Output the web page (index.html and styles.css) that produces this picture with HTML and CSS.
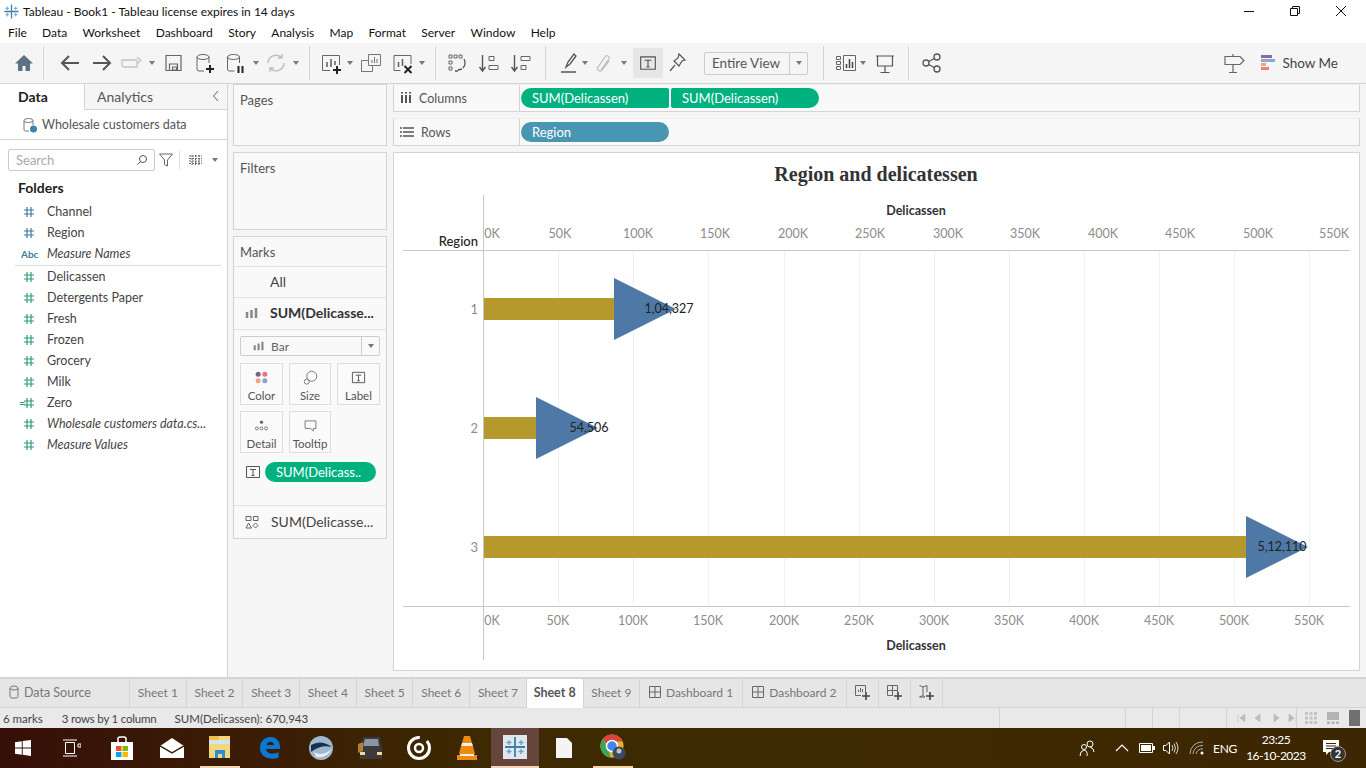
FILE: index.html
```html
<!DOCTYPE html>
<html lang="en">
<head>
<meta charset="UTF-8">
<title>Tableau - Book1</title>
<link rel="stylesheet" href="styles.css">
</head>
<body>
<svg class="defs" width="0" height="0">
  <symbol id="hash" viewBox="0 0 12 12"><path d="M4 1v10M8 1v10M1 4h10M1 8h10" fill="none" stroke="currentColor" stroke-width="1.2"/></symbol>
  <symbol id="caret" viewBox="0 0 12 24"><path d="M3 10h6l-3 4z" fill="#777"/></symbol>
  <symbol id="tbox" viewBox="0 0 16 16"><path d="M1.5 2.5h13v11h-13z" fill="none" stroke="#555"/><path d="M5 5.500h6M8 5.500v6M6.500 11.500h3" fill="none" stroke="#555"/></symbol>
  <symbol id="bars" viewBox="0 0 14 14"><path d="M2 6v6M6.5 4v8M11 2v10" fill="none" stroke="#888" stroke-width="2.5"/></symbol>
  <symbol id="snow" viewBox="0 0 24 24"><path d="M12 2v20M2 12h20" stroke="#3f7ea8" stroke-width="1.8"/><path d="M6 5v5M3.500 7.500h5M18 5v5M15.500 7.500h5M6 14v5M3.500 16.500h5M18 14v5M15.500 16.500h5" stroke="#6ba0c4" stroke-width="1.3"/></symbol>
</svg>

<div class="titlebar">
  <svg class="app-icon" width="17" height="17"><use href="#snow"/></svg>
  <span class="title-text">Tableau - Book1 - Tableau license expires in 14 days</span>
  <div class="win-controls">
    <svg width="46" height="20" viewBox="0 0 46 20"><path d="M18 10.5h10" stroke="#111"/></svg>
    <svg width="46" height="20" viewBox="0 0 46 20"><path d="M18.500 7.500h7v7h-7zM20.500 7V5.500h7v7H26" fill="none" stroke="#111"/></svg>
    <svg width="46" height="20" viewBox="0 0 46 20"><path d="M18 5l10 10M28 5L18 15" stroke="#111"/></svg>
  </div>
</div>

<div class="menubar">
  <span>File</span><span>Data</span><span>Worksheet</span><span>Dashboard</span><span>Story</span><span>Analysis</span><span>Map</span><span>Format</span><span>Server</span><span>Window</span><span>Help</span>
</div>

<div class="toolbar">
  <svg width="32" height="24" viewBox="0 0 24 24"><path d="M12 4L3 12.500h3V20h4.500v-5h3v5H18v-7.500h3z" fill="#5e7182"/></svg>
  <i class="sep first"></i>
  <svg width="32" height="24" viewBox="0 0 24 24"><path d="M21 12H4M11 5l-7 7 7 7" fill="none" stroke="#555" stroke-width="2"/></svg>
  <svg width="32" height="24" viewBox="0 0 24 24"><path d="M3 12h17M13 5l7 7-7 7" fill="none" stroke="#555" stroke-width="2"/></svg>
  <svg width="28" height="24" viewBox="0 0 24 24"><path d="M2 9h15v7H4a2 2 0 0 1-2-2zM17 6l4 3.500-4 3.500" fill="none" stroke="#c4c4c4" stroke-width="1.3"/></svg>
  <svg width="12" height="24"><use href="#caret"/></svg>
  <svg width="31" height="24" viewBox="0 0 24 24"><path d="M4.500 4.500h15v15h-15zM8 19v-6h8v6M11 16h4v3h-4z" fill="none" stroke="#666" stroke-width="1.2"/></svg>
  <svg width="32" height="24" viewBox="0 0 24 24"><ellipse cx="10" cy="6" rx="6" ry="2.5" fill="none" stroke="#666"/><path d="M4 6v12a2 2 0 0 0 2 2h5M16 6v6" fill="none" stroke="#666"/><path d="M17 14v8M13 18h8" stroke="#222" stroke-width="2"/></svg>
  <svg width="29" height="24" viewBox="0 0 24 24"><ellipse cx="10" cy="6" rx="6" ry="2.5" fill="none" stroke="#666"/><path d="M4 6v12a2 2 0 0 0 2 2h5M16 6v6" fill="none" stroke="#666"/><path d="M15 15v7M19 15v7" stroke="#222" stroke-width="2"/></svg>
  <svg width="12" height="24"><use href="#caret"/></svg>
  <svg width="28" height="24" viewBox="0 0 24 24"><path d="M4 12a8 8 0 0 1 14-5M20 12a8 8 0 0 1-14 5M18 3v4h-4M6 21v-4h4" fill="none" stroke="#c0c0c0" stroke-width="1.5"/></svg>
  <svg width="12" height="24"><use href="#caret"/></svg>
  <i class="sep"></i>
  <svg width="32" height="24" viewBox="0 0 24 24"><path d="M3.500 4.500h17V14M11 19.500H3.500v-15" fill="none" stroke="#666"/><path d="M8 16v-5M12 16V8M16 14v-4" stroke="#666" stroke-width="1.6"/><path d="M18 15v8M14 19h8" stroke="#222" stroke-width="2"/></svg>
  <svg class="tight" width="12" height="24"><use href="#caret"/></svg>
  <svg width="30" height="24" viewBox="0 0 24 24"><path d="M9.500 3.500h12v11h-12zM2.500 9.500H9M2.500 9.500v11h11v-6" fill="none" stroke="#777"/><path d="M13 12V9M15.500 12V6M18 12V8" stroke="#777"/></svg>
  <svg width="33" height="24" viewBox="0 0 24 24"><path d="M3.500 4.500h17V13M10 19.500H3.500v-15" fill="none" stroke="#666"/><path d="M8 16v-5M12 15V8" stroke="#666" stroke-width="1.6"/><path d="M14 15l7 7M21 15l-7 7" stroke="#222" stroke-width="2"/></svg>
  <svg class="tight" width="12" height="24"><use href="#caret"/></svg>
  <i class="sep"></i>
  <svg width="32" height="24" viewBox="0 0 24 24"><path d="M4 4h3v3H4zM9 4h3v3H9zM14 4h3v3h-3zM4 10h3v3H4zM4 16h3v3H4z" fill="none" stroke="#666"/><path d="M19 8a8 8 0 0 1-1 9M17 18l-4 1M10 20h3" fill="none" stroke="#555" stroke-width="1.3"/></svg>
  <svg width="33" height="24" viewBox="0 0 24 24"><path d="M5 4v15M2 16l3 4 3-4" fill="none" stroke="#555" stroke-width="1.4"/><path d="M11.500 5.500h5v4h-5zM11.500 14.500h9v4h-9z" fill="none" stroke="#666"/></svg>
  <svg width="31" height="24" viewBox="0 0 24 24"><path d="M5 4v15M2 16l3 4 3-4" fill="none" stroke="#555" stroke-width="1.4"/><path d="M11.500 5.500h9v4h-9zM11.500 14.500h5v4h-5z" fill="none" stroke="#666"/></svg>
  <i class="sep wide"></i>
  <svg width="26" height="24" viewBox="0 0 24 24"><path d="M9 16l2-5 6-8 2 2-6 8zM4 21h15" fill="none" stroke="#555" stroke-width="1.3"/></svg>
  <svg class="tight" width="12" height="24"><use href="#caret"/></svg>
  <svg width="26" height="24" viewBox="0 0 24 24"><path d="M9 19l8-11a2 2 0 0 0-4-2l-7 10a2.500 2.500 0 0 0 4 3l7-9" fill="none" stroke="#c0c0c0" stroke-width="1.3"/></svg>
  <svg width="14" height="24"><use href="#caret"/></svg>
  <span class="tool-on"><svg width="18" height="18"><use href="#tbox"/></svg></span>
  <svg width="28" height="24" viewBox="0 0 24 24"><path d="M14 3l6 6-3 1-3 5-5-5 4-3zM10 14l-5 6" fill="none" stroke="#555" stroke-width="1.2"/></svg>
  <div class="fit-box"><span>Entire View</span><b><svg width="12" height="24"><use href="#caret"/></svg></b></div>
  <i class="sep fit-sep"></i>
  <svg width="28" height="24" viewBox="0 0 22 24"><path d="M1.500 5.500h4v3h-4zM1.500 10.500h4v3h-4zM1.500 15.500h4v3h-4zM8.500 4.500h12v15h-12z" fill="none" stroke="#666"/><path d="M11.500 17v-4M14.500 17V8M17.500 17v-6" stroke="#444" stroke-width="1.5"/></svg>
  <svg class="tight" width="12" height="24"><use href="#caret"/></svg>
  <svg width="32" height="24" viewBox="0 0 24 24"><path d="M3 5h18M4.500 5v10h15V5M12 15v6M7.500 21.500h9" fill="none" stroke="#555" stroke-width="1.2"/></svg>
  <i class="sep"></i>
  <svg width="36" height="24" viewBox="0 0 24 24"><circle cx="6" cy="12" r="3" fill="none" stroke="#555" stroke-width="1.3"/><circle cx="17" cy="6" r="3" fill="none" stroke="#555" stroke-width="1.3"/><circle cx="17" cy="18" r="3" fill="none" stroke="#555" stroke-width="1.3"/><path d="M8.700 10.500l5.600-3M8.700 13.500l5.600 3" stroke="#555" stroke-width="1.3"/></svg>
  <div class="toolbar-right">
    <svg class="guide" width="24" height="24" viewBox="0 0 24 24"><path d="M3 5.500h15l4 4-4 4H3zM11 5.500V3M11 13.500V21M7 21.500h8" fill="none" stroke="#666" stroke-width="1.2"/></svg>
    <div class="showme">
      <svg width="15" height="16" viewBox="0 0 15 16"><path d="M0 0h11v3H0z" fill="#8a6d98"/><path d="M0 4h14v3H0z" fill="#86a9d0"/><path d="M0 8h5v3H0z" fill="#f2a673"/><path d="M0 12h8v3H0z" fill="#f27a80"/></svg>
      <span>Show Me</span>
    </div>
  </div>
</div>

<div class="workspace">
  <div class="data-pane">
    <div class="pane-tabs">
      <div class="pane-tab active">Data</div>
      <div class="pane-tab">Analytics<svg class="collapse" width="8" height="12" viewBox="0 0 8 12"><path d="M6 1L1.500 6 6 11" fill="none" stroke="#666"/></svg></div>
    </div>
    <div class="source-row">
      <svg width="16" height="16" viewBox="0 0 16 16"><ellipse cx="6.500" cy="3.500" rx="4.500" ry="2" fill="none" stroke="#777"/><path d="M2 3.500v9a1.500 1.500 0 0 0 1.500 1.500H7M11 3.500V8" fill="none" stroke="#777"/><circle cx="11.500" cy="12" r="3.500" fill="#3d84a8"/></svg>
      <span>Wholesale customers data</span>
    </div>
    <div class="search-row">
      <div class="search-box"><span>Search</span><svg width="12" height="12" viewBox="0 0 12 12"><circle cx="7" cy="5" r="3.500" fill="none" stroke="#555"/><path d="M4.500 7.500L1.500 10.500" stroke="#555"/></svg></div>
      <svg width="16" height="16" viewBox="0 0 16 16"><path d="M1.500 2h13L9.500 8v6l-3-1.500V8z" fill="none" stroke="#666"/></svg>
      <i class="search-sep"></i>
      <svg width="13" height="10" viewBox="0 0 13 10"><path d="M0 1h13M0 3.500h13M0 6h13M0 8.500h13M3 0v10M6.500 0v10M10 0v10" stroke="#666" stroke-dasharray="2 1"/></svg>
      <svg class="search-caret" width="12" height="24"><use href="#caret"/></svg>
    </div>
    <div class="folders">Folders</div>
    <ul class="fields">
      <li class="dim"><svg width="12" height="12"><use href="#hash"/></svg><span>Channel</span></li>
      <li class="dim"><svg width="12" height="12"><use href="#hash"/></svg><span>Region</span></li>
      <li class="dim divider"><em class="abc">Abc</em><span class="it">Measure Names</span></li>
      <li><svg width="12" height="12"><use href="#hash"/></svg><span>Delicassen</span></li>
      <li><svg width="12" height="12"><use href="#hash"/></svg><span>Detergents Paper</span></li>
      <li><svg width="12" height="12"><use href="#hash"/></svg><span>Fresh</span></li>
      <li><svg width="12" height="12"><use href="#hash"/></svg><span>Frozen</span></li>
      <li><svg width="12" height="12"><use href="#hash"/></svg><span>Grocery</span></li>
      <li><svg width="12" height="12"><use href="#hash"/></svg><span>Milk</span></li>
      <li><em class="calc">=</em><svg width="12" height="12"><use href="#hash"/></svg><span>Zero</span></li>
      <li><svg width="12" height="12"><use href="#hash"/></svg><span class="it">Wholesale customers data.cs...</span></li>
      <li><svg width="12" height="12"><use href="#hash"/></svg><span class="it">Measure Values</span></li>
    </ul>
  </div>

  <div class="cards">
    <div class="card pages">Pages</div>
    <div class="card filters">Filters</div>
    <div class="marks">
      <div class="marks-head">Marks</div>
      <div class="marks-all">All</div>
      <div class="marks-sum"><svg width="14" height="14"><use href="#bars"/></svg><b>SUM(Delicasse...</b></div>
      <div class="marks-body">
        <div class="mark-type"><svg width="12" height="12"><use href="#bars"/></svg><span>Bar</span><b><svg width="12" height="24"><use href="#caret"/></svg></b></div>
        <div class="mark-btns">
          <div class="mark-btn">
            <svg width="18" height="18" viewBox="0 0 18 18"><circle cx="5" cy="5" r="3" fill="#7b5f8f"/><circle cx="13" cy="5" r="3" fill="#f0707a"/><circle cx="5" cy="13" r="3" fill="#f2a673"/><circle cx="13" cy="13" r="3" fill="#7fa5d0"/></svg>
            <span>Color</span>
          </div>
          <div class="mark-btn">
            <svg width="18" height="18" viewBox="0 0 18 18"><circle cx="10.500" cy="7.500" r="6" fill="none" stroke="#666"/><circle cx="4.500" cy="14" r="3" fill="#fafafa" stroke="#666"/></svg>
            <span>Size</span>
          </div>
          <div class="mark-btn">
            <svg width="18" height="18"><use href="#tbox"/></svg>
            <span>Label</span>
          </div>
          <div class="mark-btn">
            <svg width="18" height="18" viewBox="0 0 18 18"><circle cx="9" cy="5" r="2" fill="#666"/><circle cx="3.500" cy="12.500" r="1.800" fill="none" stroke="#666"/><circle cx="9" cy="12.500" r="1.800" fill="none" stroke="#666"/><circle cx="14.500" cy="12.500" r="1.800" fill="none" stroke="#666"/></svg>
            <span>Detail</span>
          </div>
          <div class="mark-btn">
            <svg width="18" height="18" viewBox="0 0 18 18"><path d="M2.500 3.500h13v9h-3v3l-3.500-3h-6.500z" fill="none" stroke="#666"/></svg>
            <span>Tooltip</span>
          </div>
        </div>
        <div class="mark-pill-row">
          <svg width="16" height="16"><use href="#tbox"/></svg>
          <span class="mark-pill">SUM(Delicass..</span>
        </div>
      </div>
      <div class="marks-foot">
        <svg width="14" height="14" viewBox="0 0 14 14"><path d="M1 1.500h5v4H1zM8.500 1.500h4.500v4H8.500zM3.500 8l3 5h-5.500zM10.500 8l2.500 2.500-2.500 2.500L8 10.500z" fill="none" stroke="#666"/></svg>
        <span>SUM(Delicasse...</span>
      </div>
    </div>
  </div>

  <div class="view">
    <div class="shelf">
      <div class="shelf-label">
        <svg width="12" height="12" viewBox="0 0 12 12"><path d="M2 3v8M6 3v8M10 3v8M2 0v1.500M6 0v1.500M10 0v1.500" stroke="#555" stroke-width="2"/></svg>
        <span>Columns</span>
      </div>
      <span class="pill green left">SUM(Delicassen)</span>
      <span class="pill green right">SUM(Delicassen)</span>
    </div>
    <div class="shelf">
      <div class="shelf-label">
        <svg width="14" height="12" viewBox="0 0 14 12"><path d="M3 2h11M3 6h11M3 10h11M0 2h2M0 6h2M0 10h2" stroke="#555" stroke-width="1.5"/></svg>
        <span>Rows</span>
      </div>
      <span class="pill blue">Region</span>
    </div>

    <div class="chart">
      <svg width="965" height="517" viewBox="394 153 965 517">
        <text class="chart-title" x="876" y="181" text-anchor="middle">Region and delicatessen</text>
        <g class="grid">
          <path d="M558.500 250V606M633.500 250V606M708.500 250V606M784.500 250V606M859.500 250V606M934.500 250V606M1009.500 250V606M1084.500 250V606M1159.500 250V606M1234.500 250V606M1309.500 250V606"/>
        </g>
        <path class="axis" d="M483.500 195V660M403 250.500H1350M403 606.500H1350"/>

        <text class="axis-title" x="916" y="215" text-anchor="middle">Delicassen</text>
        <text class="axis-title" x="916" y="650" text-anchor="middle">Delicassen</text>
        <text class="row-title" x="478" y="246" text-anchor="end">Region</text>

        <g class="tick" text-anchor="middle">
          <text x="492" y="238">0K</text><text x="560" y="238">50K</text><text x="638" y="238">100K</text><text x="715" y="238">150K</text><text x="793" y="238">200K</text><text x="870" y="238">250K</text><text x="948" y="238">300K</text><text x="1025" y="238">350K</text><text x="1103" y="238">400K</text><text x="1180" y="238">450K</text><text x="1258" y="238">500K</text><text x="1334" y="238">550K</text>
          <text x="492" y="625">0K</text><text x="558" y="625">50K</text><text x="633" y="625">100K</text><text x="708" y="625">150K</text><text x="784" y="625">200K</text><text x="859" y="625">250K</text><text x="934" y="625">300K</text><text x="1009" y="625">350K</text><text x="1084" y="625">400K</text><text x="1159" y="625">450K</text><text x="1234" y="625">500K</text><text x="1309" y="625">550K</text>
        </g>
        <g class="tick row-num" text-anchor="end">
          <text x="478" y="314">1</text><text x="478" y="433">2</text><text x="478" y="552">3</text>
        </g>

        <g class="bar">
          <rect x="484" y="298" width="130" height="22"/>
          <rect x="484" y="417" width="52" height="22"/>
          <rect x="484" y="536" width="762" height="22"/>
        </g>
        <g class="tri">
          <path d="M614 278V340L676 309z"/>
          <path d="M536 397V459L598 428z"/>
          <path d="M1246 516V578L1308 547z"/>
        </g>
        <g class="val" text-anchor="middle">
          <text x="669" y="313">1,04,327</text>
          <text x="589" y="432">54,506</text>
          <text x="1282" y="551">5,12,110</text>
        </g>
      </svg>
    </div>
  </div>
</div>

<div class="tabs">
  <div class="tab source"><svg width="10" height="14" viewBox="0 0 10 14"><ellipse cx="5" cy="3" rx="4" ry="2" fill="none" stroke="#777"/><path d="M1 3v8.500Q1 13 3 13h4q2 0 2-1.500V3" fill="none" stroke="#777"/></svg><span>Data Source</span></div>
  <div class="tab sheet">Sheet 1</div>
  <div class="tab sheet">Sheet 2</div>
  <div class="tab sheet">Sheet 3</div>
  <div class="tab sheet">Sheet 4</div>
  <div class="tab sheet">Sheet 5</div>
  <div class="tab sheet">Sheet 6</div>
  <div class="tab sheet">Sheet 7</div>
  <div class="tab sheet current">Sheet 8</div>
  <div class="tab sheet">Sheet 9</div>
  <div class="tab dash"><svg width="12" height="12" viewBox="0 0 12 12"><path d="M.5.500h11v11H.5zM6 .5v11M.5 6h11" fill="none" stroke="#666"/></svg><span>Dashboard 1</span></div>
  <div class="tab dash"><svg width="12" height="12" viewBox="0 0 12 12"><path d="M.5.500h11v11H.5zM6 .5v11M.5 6h11" fill="none" stroke="#666"/></svg><span>Dashboard 2</span></div>
  <div class="tab add"><svg width="17" height="17" viewBox="0 0 17 17"><path d="M1.500 1.500h10V8M7 11.500H1.500v-10M4.500 8V6M6.500 8V4M8.500 8V5" fill="none" stroke="#666"/><path d="M12 8v8M8 12h8" stroke="#444" stroke-width="1.6"/></svg></div>
  <div class="tab add"><svg width="17" height="17" viewBox="0 0 17 17"><path d="M1.500 1.500h10V8M7 11.500H1.500v-10M6.500 1.500v10M1.500 6.500h10" fill="none" stroke="#666"/><path d="M12 8v8M8 12h8" stroke="#444" stroke-width="1.6"/></svg></div>
  <div class="tab add"><svg width="17" height="17" viewBox="0 0 17 17"><path d="M1.500 1.500L5 3l4-1.500V8M7 13L5 11.500 1.500 13zM5 3v8" fill="none" stroke="#666"/><path d="M12 8v8M8 12h8" stroke="#444" stroke-width="1.6"/></svg></div>
</div>

<div class="status">
  <span class="st marks-count">6 marks</span>
  <span class="st rows-count">3 rows by 1 column</span>
  <span class="st sum-count">SUM(Delicassen): 670,943</span>
  <div class="st-cells">
    <i class="c1"></i><i class="c2"></i><i class="c3"></i><i class="c4"></i>
    <div class="pager">
      <svg width="62" height="10" viewBox="0 0 62 10"><path d="M2 1v8M9 1L4 5l5 4zM24 1l-5 4 5 4zM38 1l5 4-5 4zM53 1l5 4-5 4zM60 1v8" fill="#bbb" stroke="#bbb" stroke-width=".6"/></svg>
    </div>
    <div class="views">
      <svg width="12" height="12" viewBox="0 0 12 12"><path d="M0 0h3v3H0zM4.500 0h3v3h-3zM9 0h3v3H9zM0 4.500h3v3H0zM4.500 4.500h3v3h-3zM9 4.500h3v3H9zM0 9h3v3H0zM4.500 9h3v3h-3zM9 9h3v3H9z" fill="#c4c4c4"/></svg>
      <svg width="12" height="12" viewBox="0 0 12 12"><path d="M0 0h12v8H0zM0 9.500h3V12H0zM4.500 9.500h3V12h-3zM9 9.500h3V12H9z" fill="#b4b4b4"/></svg>
      <svg width="12" height="16" viewBox="0 0 12 16"><path d="M0 0h11v16H0z" fill="#707070"/></svg>
    </div>
  </div>
</div>

<div class="taskbar">
  <svg class="start" width="16" height="16" viewBox="0 0 16 16"><path d="M0 2.200L6.800 1.200V7.500H0zM7.700 1.100L16 0v7.500H7.700zM0 8.400h6.800v6.400L0 13.800zM7.700 8.400H16V16l-8.300-1.200z" fill="#fff"/></svg>
  <svg class="task-view" width="18" height="18" viewBox="0 0 18 18"><path d="M2.500 3.500h9v11h-9zM0 1h14M0 17h14M15 5h3v3h-3z" fill="none" stroke="#fff"/></svg>
  <svg class="store" width="24" height="24" viewBox="0 0 24 24"><path d="M1 6h22v18H1z" fill="#fff"/><path d="M8 6V3q0-2 2-2h4q2 0 2 2v3" fill="none" stroke="#fff" stroke-width="1.5"/><path d="M6 10h5.500v5H6z" fill="#f25022"/><path d="M12.500 10H18v5h-5.500z" fill="#7fba00"/><path d="M6 16h5.500v5H6z" fill="#00a4ef"/><path d="M12.500 16H18v5h-5.500z" fill="#ffb900"/></svg>
  <svg class="mail" width="24" height="20" viewBox="0 0 24 20"><path d="M0 8L12 0l12 8v12H0z" fill="#fff"/><path d="M0 8l12 7 12-7" fill="none" stroke="#3b2503" stroke-width="1.5"/></svg>
  <span class="app explorer"><svg width="24" height="22" viewBox="0 0 24 22"><path d="M1 0h21v22H1z" fill="#f4d77b"/><path d="M1 0h10v4H1z" fill="#f0c14d"/><path d="M1 4h21v4H1z" fill="#cfe4f5"/><path d="M7 14h10v8H7z" fill="#2b8fd8"/><path d="M10 18h4v4h-4z" fill="#f4d77b"/></svg></span>
  <svg class="edge" width="22" height="24" viewBox="0 0 22 24"><path d="M1 12C1 5 6 1 11.500 1 18 1 21.500 6 21 13H7c.3 4 6 6.500 12.500 3v5.500C11 25 1 21 1 12zM7.500 9h7.500c0-4.500-6.500-4.500-7.500 0z" fill="#0a78d7"/></svg>
  <svg class="ball" width="26" height="26" viewBox="0 0 26 26"><circle cx="13" cy="13" r="12" fill="#9fb7cf"/><path d="M3 10Q13 4 24 12Q13 9 3 17z" fill="#17324f"/><path d="M6 17Q14 22 24 14Q18 24 8 22z" fill="#e8eef3"/></svg>
  <svg class="truck" width="26" height="28" viewBox="0 0 26 28"><path d="M5 3h17l2 14v8H2v-8z" fill="#3d3a3a"/><path d="M7 5h13l1 7H5z" fill="#8c97a5"/><path d="M2 18h5v3H2zM19 18h5v3h-5z" fill="#e8d9a3"/><path d="M0 10l5-2v9l-5 2z" fill="#b07f35"/></svg>
  <svg class="target" width="26" height="26" viewBox="0 0 26 26"><circle cx="13" cy="13" r="10.500" fill="none" stroke="#fff" stroke-width="3" stroke-dasharray="50 8"/><circle cx="13" cy="13" r="4" fill="none" stroke="#fff" stroke-width="2.5"/></svg>
  <svg class="vlc" width="22" height="26" viewBox="0 0 22 26"><path d="M8 1h6l2 7H6zM5 11h12l2 8H3z" fill="#f08a0c"/><path d="M6 8h10l1 3H5z" fill="#eee"/><path d="M1 20h20v5H1z" fill="#ef8c10"/><path d="M4 19h14v2H4z" fill="#eee"/></svg>
  <span class="app tableau"><svg class="tile" width="24" height="24"><use href="#snow"/></svg></span>
  <svg class="page" width="16" height="20" viewBox="0 0 16 20"><path d="M0 0h11l5 5v15H0z" fill="#f4f4f4"/></svg>
  <span class="app chrome"><svg width="26" height="26" viewBox="0 0 26 26"><circle cx="12" cy="12" r="11.500" fill="#e5b62c"/><path d="M12 .5A11.500 11.500 0 0 1 22.600 7.500H12a5 5 0 0 0-4.800 3.500L2.900 5A11.500 11.500 0 0 1 12 .5z" fill="#db4437"/><path d="M2.900 5l5 8.500 3 10A11.500 11.500 0 0 1 2.900 5z" fill="#3aa757"/><circle cx="12" cy="12" r="5.500" fill="#4285f4" stroke="#fff" stroke-width="1.5"/><circle cx="19" cy="19" r="6.500" fill="#3a4a63"/><circle cx="19" cy="17" r="2.500" fill="#c9c0bc"/></svg></span>

  <div class="tray">
    <svg class="t-people" width="18" height="18" viewBox="0 0 18 18"><circle cx="12" cy="5" r="3" fill="none" stroke="#fff"/><circle cx="6" cy="8" r="2.500" fill="none" stroke="#fff"/><path d="M2 17q0-5 4-6 4 1 3 6M12 8q4 1 4 5" fill="none" stroke="#fff"/></svg>
    <svg class="t-chev" width="14" height="8" viewBox="0 0 14 8"><path d="M1 7l6-6 6 6" fill="none" stroke="#fff" stroke-width="1.2"/></svg>
    <svg class="t-batt" width="16" height="10" viewBox="0 0 16 10"><path d="M.5 .5h13v9H.5z" fill="none" stroke="#fff"/><path d="M2 2h10v6H2zM14 3h2v4h-2z" fill="#fff"/></svg>
    <svg class="t-vol" width="16" height="14" viewBox="0 0 16 14"><path d="M.5 4.500h2.500L6.500 1v12L3 9.500H.5z" fill="none" stroke="#fff"/><path d="M9 4q2 3 0 6M11 2.500q3 4.500 0 9M13 1q4 6 0 12" fill="none" stroke="#fff" stroke-width=".8"/></svg>
    <svg class="t-wifi" width="16" height="14" viewBox="0 0 16 14"><path d="M1 13A12 12 0 0 1 14 1M4 13A9 9 0 0 1 14 4.500M7 13A6 6 0 0 1 14 8" fill="none" stroke="#bbb" stroke-width=".9"/><circle cx="13" cy="12" r="1.500" fill="#fff"/></svg>
    <span class="t-lang">ENG</span>
    <div class="t-clock"><span>23:25</span><span>16-10-2023</span></div>
    <div class="t-notif">
      <svg width="16" height="16" viewBox="0 0 16 16"><path d="M0 0h16v12H6l-3 3v-3H0z" fill="#fff"/><path d="M3 3.500h10M3 6h10M3 8.500h7" stroke="#3b2503"/></svg>
      <span class="t-badge">2</span>
    </div>
  </div>
</div>
</body>
</html>
```

FILE: styles.css
```css
* {
  margin: 0;
  padding: 0;
  box-sizing: border-box;
}

html, body {
  width: 1366px;
  height: 768px;
  overflow: hidden;
}

body {
  font-family: Lato, "Noto Sans", sans-serif;
  font-size: 13px;
  color: #333;
  background: #f5f5f5;
}

svg {
  display: block;
  flex: none;
}

.defs {
  position: absolute;
}

/* title + menu */
.titlebar {
  height: 22px;
  background: #fff;
  display: flex;
  align-items: center;
  padding-left: 3px;
  color: #111;
  font-size: 12px;
}

.title-text {
  margin-left: 3px;
}

.win-controls {
  margin-left: auto;
  margin-right: 2px;
  display: flex;
}

.menubar {
  height: 21px;
  background: #fff;
  display: flex;
  align-items: center;
  padding-left: 8px;
  gap: 15.3px;
  color: #111;
  font-size: 12px;
}

/* toolbar */
.toolbar {
  height: 41px;
  display: flex;
  align-items: center;
  padding-left: 8px;
  background: #f5f5f5;
  border-bottom: 1px solid #d4d4d4;
}

.sep {
  width: 1px;
  height: 34px;
  background: #d4d4d4;
  margin: 0 5px 0 7px;
}

.sep.first {
  margin: 0 10px 0 3px;
}

.sep.wide {
  margin: 0 10px 0 8px;
}

.sep.fit-sep {
  margin: 0 8px 0 15px;
}

.tight {
  margin-left: -3px;
}

.tool-on {
  width: 30px;
  height: 30px;
  margin-left: 2px;
  background: #e6e6e6;
  display: flex;
  align-items: center;
  justify-content: center;
}

.fit-box {
  width: 104px;
  height: 23px;
  margin-left: 13px;
  border: 1px solid #ccc;
  border-radius: 2px;
  display: flex;
  align-items: center;
  font-size: 13.5px;
  color: #555;
  padding-left: 7px;
}

.fit-box span {
  flex: 1;
}

.fit-box b {
  width: 18px;
  height: 21px;
  border-left: 1px solid #ccc;
  display: flex;
  align-items: center;
  justify-content: center;
}

.toolbar-right {
  margin-left: auto;
  display: flex;
  align-items: center;
  margin-right: 28px;
}

.showme {
  display: flex;
  align-items: center;
  gap: 6px;
  margin-left: 15px;
  font-size: 13.5px;
  color: #444;
}

/* main area */
.workspace {
  height: 593px;
  display: flex;
}

.data-pane {
  flex: none;
  width: 228px;
  background: #fff;
  border-right: 1px solid #d4d4d4;
}

.pane-tabs {
  height: 26px;
  display: flex;
  font-size: 14px;
}

.pane-tab {
  position: relative;
  flex: 1;
  padding: 4px 0 0 12px;
  background: #f5f5f5;
  border-bottom: 1px solid #d4d4d4;
  color: #555;
}

.pane-tab.active {
  flex: none;
  width: 85px;
  padding-left: 18px;
  background: #fff;
  border-bottom: none;
  border-right: 1px solid #d4d4d4;
  color: #222;
  font-weight: 700;
}

.collapse {
  position: absolute;
  right: 7px;
  top: 6px;
}

.source-row {
  height: 30px;
  display: flex;
  align-items: center;
  gap: 4px;
  padding-left: 22px;
  border-bottom: 1px solid #d4d4d4;
  color: #555;
  font-size: 12.5px;
}

.search-row {
  height: 40px;
  display: flex;
  align-items: center;
  padding: 0 0 0 8px;
}

.search-box {
  width: 147px;
  height: 22px;
  border: 1px solid #ccc;
  border-radius: 2px;
  display: flex;
  align-items: center;
  justify-content: space-between;
  padding: 0 6px 0 7px;
  color: #aaa;
}

.search-row > svg {
  margin-left: 3px;
}

.search-sep {
  width: 1px;
  height: 18px;
  background: #ddd;
  margin: 0 6px 0 5px;
}

.search-row .search-caret {
  margin-left: 7px;
}

.folders {
  height: 17px;
  padding-left: 18px;
  margin-top: -1px;
  font-size: 14px;
  font-weight: 700;
  color: #222;
  line-height: 17px;
}

.fields {
  list-style: none;
  margin-top: 5px;
  font-size: 12.5px;
}

.fields li {
  position: relative;
  height: 21px;
  display: flex;
  align-items: center;
  color: #2e9c7a;
  padding-left: 23px;
}

.fields li.dim {
  color: #3f7a9c;
}

.fields li span {
  position: absolute;
  left: 47px;
  color: #444;
  white-space: nowrap;
}

.fields li span.it {
  font-style: italic;
}

.fields li.divider {
  height: 23px;
  padding-bottom: 2px;
}

.fields li.divider::after {
  content: "";
  position: absolute;
  left: 15px;
  right: 6px;
  bottom: 0;
  height: 1px;
  background: #ddd;
}

.fields em {
  font-style: normal;
}

.abc {
  position: absolute;
  left: 21px;
  font-size: 10px;
  font-weight: 700;
  color: #3f7a9c;
}

.calc {
  position: absolute;
  left: 19px;
  font-size: 11px;
}

/* pages, filters, marks */
.cards {
  flex: none;
  width: 165px;
  padding: 0 6px 0 5px;
}

.card,
.marks {
  border: 1px solid #d4d4d4;
  background: #f9f9f9;
  color: #555;
}

.card {
  padding: 7px 6px;
}

.pages {
  height: 62px;
}

.filters {
  height: 78px;
  margin-top: 6px;
}

.marks {
  height: 303px;
  margin-top: 6px;
}

.marks-head {
  height: 30px;
  padding: 7px 6px;
  border-bottom: 1px solid #e2e2e2;
}

.marks-all {
  height: 31px;
  padding: 6px 0 0 36px;
  border-bottom: 1px solid #e2e2e2;
  font-size: 14px;
  color: #444;
}

.marks-sum {
  height: 32px;
  display: flex;
  align-items: center;
  padding: 0 0 2px 11px;
  border-bottom: 1px solid #e2e2e2;
  font-size: 14px;
  color: #333;
}

.marks-sum b {
  margin-left: 11px;
}

.marks-body {
  height: 176px;
  padding: 6px 6px 0;
  border-bottom: 1px solid #e2e2e2;
}

.mark-type {
  height: 20px;
  display: flex;
  align-items: center;
  border: 1px solid #ccc;
  border-radius: 2px;
  padding-left: 12px;
  color: #666;
  font-size: 12px;
}

.mark-type span {
  flex: 1;
  margin-left: 6px;
}

.mark-type b {
  width: 18px;
  height: 18px;
  border-left: 1px solid #ccc;
  display: flex;
  align-items: center;
  justify-content: center;
}

.mark-btns {
  display: grid;
  grid-template-columns: 43px 42px 43px;
  gap: 6px 6px;
  margin-top: 7px;
}

.mark-btn {
  height: 42px;
  border: 1px solid #ddd;
  background: #fafafa;
  display: flex;
  flex-direction: column;
  align-items: center;
  padding-top: 6px;
  gap: 4px;
  font-size: 11.5px;
  color: #555;
}

.mark-btn svg {
  width: 15px;
  height: 15px;
}

.mark-pill-row {
  display: flex;
  align-items: center;
  margin-top: 9px;
  padding-left: 5px;
  gap: 4px;
}

.mark-pill {
  width: 111px;
  height: 20px;
  padding-left: 11px;
  border-radius: 10px;
  background: #00b180;
  color: #fff;
  font-size: 13px;
  line-height: 20px;
  white-space: nowrap;
}

.marks-foot {
  height: 31px;
  display: flex;
  align-items: center;
  gap: 12px;
  padding-left: 11px;
  font-size: 14px;
  color: #444;
}

/* shelves + chart */
.view {
  flex: 1;
  min-width: 0;
  padding-right: 6px;
}

.shelf {
  height: 28px;
  margin-bottom: 6px;
  display: flex;
  align-items: center;
  background: #f9f9f9;
  border: 1px solid #d4d4d4;
  border-top-color: #eee;
}

.shelf-label {
  width: 126px;
  height: 100%;
  display: flex;
  align-items: center;
  gap: 7px;
  padding-left: 6px;
  margin-right: 1px;
  border-right: 1px solid #d4d4d4;
  color: #555;
  font-size: 12.5px;
}

.pill {
  width: 148px;
  height: 20px;
  margin-right: 2px;
  padding-left: 11px;
  color: #fff;
  line-height: 20px;
}

.pill.green {
  background: #00b180;
}

.pill.blue {
  background: #4996b2;
  border-radius: 10px;
}

.pill.left {
  border-radius: 10px 2px 2px 10px;
}

.pill.right {
  border-radius: 2px 10px 10px 2px;
}

.chart {
  height: 519px;
  background: #fff;
  border: 1px solid #d4d4d4;
}

.chart-title {
  font-family: "Liberation Serif", serif;
  font-size: 20px;
  font-weight: 700;
  fill: #333;
}

.grid path {
  stroke: #f0f0f0;
  fill: none;
}

.axis {
  stroke: #c8c8c8;
  fill: none;
}

.axis-title {
  font-size: 12.5px;
  font-weight: 700;
  fill: #333;
}

.row-title {
  font-size: 13px;
  font-weight: 500;
  fill: #222;
}

.tick {
  font-size: 12.5px;
  fill: #8c8c8c;
}

.row-num {
  font-size: 13px;
}

.bar rect {
  fill: #b5992d;
}

.tri path {
  fill: #4e79a7;
}

.val {
  font-size: 12.5px;
  fill: #222;
}

/* sheet tabs + status */
.tabs {
  height: 31px;
  display: flex;
  background: #e6e6e6;
  border-top: 2px solid #d4d4d4;
  border-bottom: 1px solid #d4d4d4;
  color: #777;
  font-size: 12px;
}

.tab {
  height: 28px;
  padding-bottom: 2px;
  display: flex;
  align-items: center;
  justify-content: center;
  border-right: 1px solid #d4d4d4;
  white-space: nowrap;
}

.tab.source {
  width: 130px;
  justify-content: flex-start;
  gap: 5px;
  padding-left: 9px;
  font-size: 12.5px;
}

.tab.sheet {
  width: 56.7px;
}

.tab.current {
  background: #fff;
  color: #555;
  font-weight: 700;
  font-size: 12.5px;
  height: 29px;
}

.tab.dash {
  gap: 5px;
}

.tab.dash:nth-child(11) {
  width: 102.7px;
}

.tab.dash:nth-child(12) {
  width: 104px;
}

.tab.add {
  width: 32px;
}

.status {
  height: 20px;
  position: relative;
  display: flex;
  align-items: center;
  background: #e9e9e9;
  color: #444;
  font-size: 11.5px;
}

.marks-count {
  margin-left: 3px;
}

.rows-count {
  margin-left: 19px;
  letter-spacing: -.2px;
}

.sum-count {
  margin-left: 18px;
}

.st-cells {
  margin-left: auto;
  width: 367px;
  height: 100%;
  display: flex;
  align-items: center;
}

.st-cells i {
  height: 100%;
  border-left: 1px solid #d4d4d4;
}

.c1 {
  width: 126px;
}

.c2,
.c3 {
  width: 27px;
}

.c4 {
  width: 47px;
}

.pager {
  width: 71px;
  height: 100%;
  display: flex;
  align-items: center;
  padding-left: 9px;
  border-left: 1px solid #d4d4d4;
  border-right: 1px solid #d4d4d4;
}

.views {
  display: flex;
  align-items: center;
  gap: 10px;
  padding-left: 8px;
}

/* taskbar */
.taskbar {
  height: 40px;
  display: flex;
  align-items: center;
  color: #fff;
  background: linear-gradient(90deg, #360f08 0, #3a1a06 200px, #3d2a02 500px, #3d2702 100%);
}

.start {
  margin-left: 15px;
}

.task-view {
  margin-left: 32px;
}

.store {
  margin-left: 29px;
}

.mail {
  margin-left: 26px;
}

.app {
  height: 40px;
  display: flex;
  align-items: center;
  justify-content: center;
  border-bottom: 2px solid #f2d5b0;
}

.explorer {
  width: 40px;
  margin-left: 16px;
}

.edge {
  margin-left: 19px;
}

.ball {
  margin-left: 27px;
}

.truck {
  margin-left: 24px;
}

.target {
  margin-left: 22px;
}

.vlc {
  margin-left: 24px;
}

.tableau {
  width: 48px;
  margin-left: 13px;
  background: #66463c;
}

.tile {
  background: #dfe8ef;
}

.page {
  margin-left: 17px;
}

.chrome {
  width: 40px;
  margin-left: 21px;
}

.tray {
  margin-left: auto;
  position: relative;
  width: 290px;
  height: 40px;
  display: flex;
  align-items: center;
  font-size: 12px;
}

.t-people {
  margin-left: 2px;
}

.t-chev {
  margin-left: 19px;
}

.t-batt {
  margin-left: 10px;
}

.t-vol {
  margin-left: 8px;
}

.t-wifi {
  margin-left: 10px;
}

.t-lang {
  margin-left: 8px;
  letter-spacing: -.3px;
}

.t-clock {
  width: 72px;
  margin: -2px 0 0 3px;
  display: flex;
  flex-direction: column;
  align-items: center;
  gap: 3px;
  line-height: 13px;
  letter-spacing: -.5px;
}

.t-notif {
  position: relative;
  margin-left: 11px;
}

.t-badge {
  position: absolute;
  left: 7px;
  top: 6px;
  width: 16px;
  height: 16px;
  border-radius: 50%;
  background: #333;
  border: 1px solid #999;
  font-size: 11px;
  font-weight: 700;
  line-height: 14px;
  text-align: center;
}
```
